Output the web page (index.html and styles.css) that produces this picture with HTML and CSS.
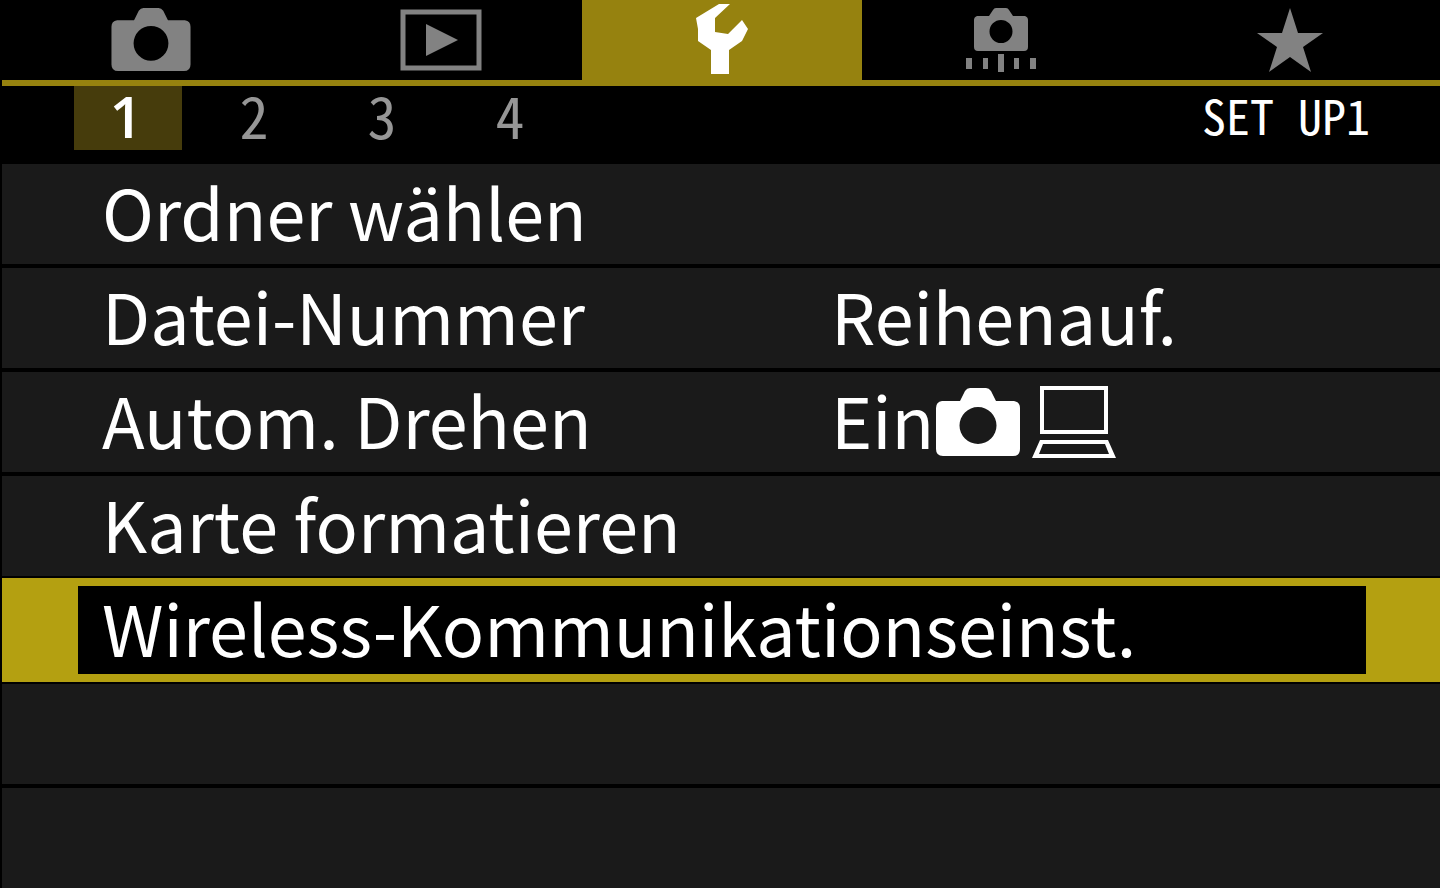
FILE: index.html
```html
<!DOCTYPE html>
<html lang="de">
<head>
<meta charset="utf-8">
<meta name="viewport" content="width=device-width, initial-scale=1">
<title>SET UP1</title>
<link rel="stylesheet" href="styles.css">
</head>
<body>
<main class="menu">
  <nav class="tabs">
    <button class="tab" type="button" aria-label="Aufnahme">
      <svg width="82" height="64" viewBox="0 0 84 68"><path fill="currentColor" fill-rule="evenodd" d="M6 13H24L29 3Q31 0 34 0H50Q53 0 55 3L60 13H78Q84 14 84 20V60Q84 67 77 67H7Q0 67 0 60V20Q0 14 6 13ZM42 19a18.500 18.500 0 1 0 0 37a18.500 18.500 0 1 0 0-37Z"/></svg>
    </button>
    <button class="tab" type="button" aria-label="Wiedergabe">
      <svg width="82" height="64" viewBox="0 0 82 64"><path fill="none" stroke="currentColor" stroke-width="5" d="M3 4H79V60H3Z"/><path fill="currentColor" d="M26 16L58 32L26 48Z"/></svg>
    </button>
    <button class="tab tab-active" type="button" aria-label="Einstellung" aria-current="page">
      <svg width="54" height="72" viewBox="0 0 54 72"><path fill="currentColor" d="M24 0H35L20 14V28L33 30L47 16L53 25L47 37L34 46V70H16V46L3 37V25L1 14Z"/></svg>
    </button>
    <button class="tab" type="button" aria-label="Individualfunktionen">
      <svg width="70" height="66" viewBox="0 0 70 66"><path fill="currentColor" fill-rule="evenodd" d="M11 9H23L27 3Q28 1 30 1H40Q42 1 43 3L47 9H59Q62 10 62 13V40Q62 44 58 44H12Q8 44 8 40V13Q8 10 11 9ZM35 13a11.500 11.500 0 1 0 0 23a11.500 11.500 0 1 0 0-23Z"/><path fill="currentColor" d="M0 51H6V62H0ZM17 51H22V62H17ZM32 47H38V65H32ZM48 51H53V62H48ZM64 51H70V62H64Z"/></svg>
    </button>
    <button class="tab" type="button" aria-label="My Menu">
      <svg width="66" height="64" viewBox="0 0 66 64"><path fill="currentColor" d="M33 0L41 25H66L46 39L54 64L33 49L12 64L20 39L0 25H25Z"/></svg>
    </button>
  </nav>

  <div class="pages">
    <button class="page page-active" type="button" aria-current="true">1</button>
    <button class="page" type="button">2</button>
    <button class="page" type="button">3</button>
    <button class="page" type="button">4</button>
    <h1 class="title">SET UP1</h1>
  </div>

  <ul class="rows">
    <li class="row"><button class="item" type="button"><span>Ordner wählen</span></button></li>
    <li class="row"><button class="item" type="button"><span>Datei-Nummer</span><span>Reihenauf.</span></button></li>
    <li class="row"><button class="item" type="button"><span>Autom. Drehen</span><span class="value">Ein<span class="value-icons"><svg width="84" height="68" viewBox="0 0 84 68"><path fill="currentColor" fill-rule="evenodd" d="M6 13H24L29 3Q31 0 34 0H50Q53 0 55 3L60 13H78Q84 14 84 20V61Q84 68 77 68H7Q0 68 0 61V20Q0 14 6 13ZM42 19a18.500 18.500 0 1 0 0 37a18.500 18.500 0 1 0 0-37Z"/></svg><svg width="84" height="72" viewBox="0 0 84 72"><path fill="currentColor" fill-rule="evenodd" d="M8 0H76V48H8ZM12 4V44H72V4ZM8 54H76L84 72H0ZM11 58L7 68H77L73 58Z"/></svg></span></span></button></li>
    <li class="row"><button class="item" type="button"><span>Karte formatieren</span></button></li>
    <li class="row row-selected"><button class="item" type="button"><span>Wireless-Kommunikationseinst.</span></button></li>
    <li class="row"></li>
    <li class="row"></li>
  </ul>
</main>
</body>
</html>
```
FILE: styles.css
```css
* {
  box-sizing: border-box;
}

body {
  margin: 0;
  background: #000;
  color: #fff;
  font-family: "Noto Sans CJK JP", "Noto Sans", sans-serif;
}

button {
  margin: 0;
  padding: 0;
  border: 0;
  background: none;
  color: inherit;
  font: inherit;
}

svg {
  display: block;
  flex: none;
}

.menu {
  padding-left: 2px;
}

.tabs {
  display: grid;
  grid-template-columns: 298fr 282fr 280fr 278fr 300fr;
  border-bottom: 6px solid #96820f;
}

.tab {
  display: flex;
  align-items: center;
  justify-content: center;
  height: 80px;
  color: #828282;
}

.tab-active {
  background: #96820f;
  color: #fff;
}

.pages {
  display: flex;
  align-items: flex-start;
  gap: 20px;
  height: 78px;
  padding: 0 70px 0 72px;
}

.page {
  width: 108px;
  height: 64px;
  padding-right: 4px;
  padding-bottom: 8px;
  color: #969696;
  font-family: "Noto Sans Mono CJK JP", "Noto Sans CJK JP", sans-serif;
  font-size: 58px;
  line-height: 56px;
}

.page-active {
  padding-bottom: 4px;
  background: #463c0c;
  color: #fff;
  font-family: "Open Sans", sans-serif;
  font-weight: 600;
  line-height: 60px;
}

.title {
  margin: 0 0 0 auto;
  font-family: "Noto Sans Mono CJK JP", "Noto Sans CJK JP", sans-serif;
  font-size: 48px;
  font-weight: 400;
  line-height: 56px;
}

.rows {
  display: grid;
  gap: 4px;
  margin: 0;
  padding: 0;
  list-style: none;
}

.row {
  min-height: 100px;
  background: #1a1a1a;
}

.item {
  display: grid;
  grid-template-columns: 728fr 608fr;
  align-items: center;
  width: 100%;
  height: 100px;
  padding-bottom: 6px;
  padding-left: 100px;
  font-size: 70px;
  line-height: 72px;
  text-align: left;
  white-space: nowrap;
}

.value {
  display: flex;
  align-items: center;
  gap: 2px;
}

.value-icons {
  display: flex;
  align-items: center;
  gap: 12px;
  padding-top: 6px;
}

.row-selected {
  margin: -2px 0;
  padding: 8px 74px 8px 76px;
  background: #b4a011;
}

.row-selected .item {
  height: 88px;
  padding-left: 24px;
  background: #000;
}
```
